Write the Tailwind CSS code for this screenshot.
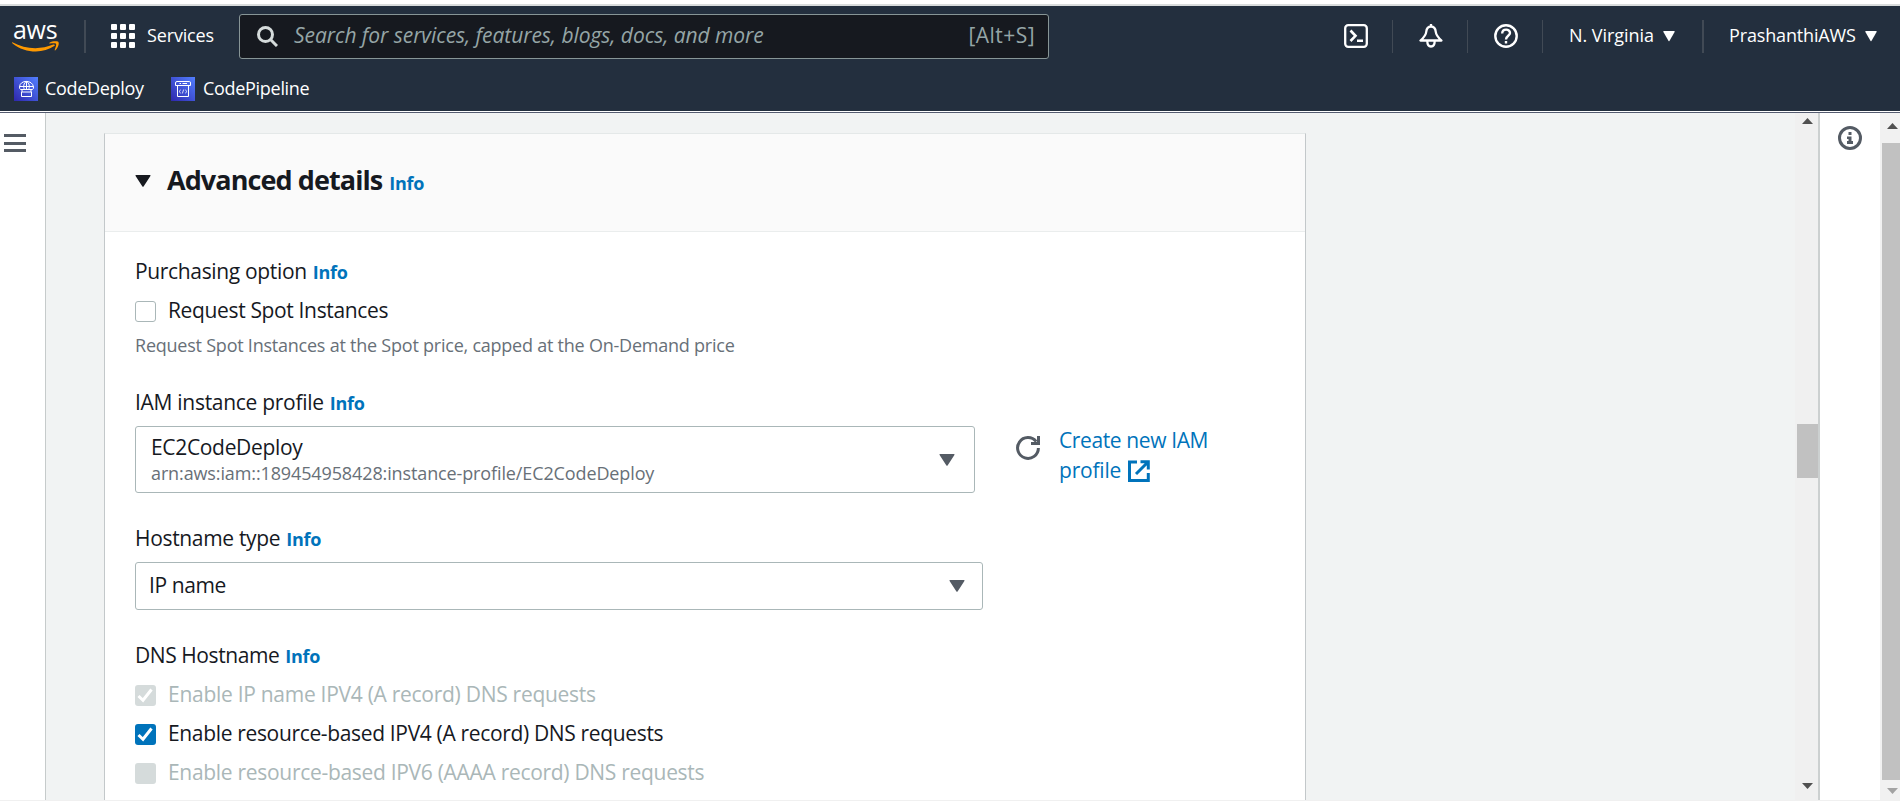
<!DOCTYPE html>
<html lang="en">
<head>
<meta charset="utf-8">
<title>Launch an instance</title>
<script src="https://cdn.jsdelivr.net/npm/@tailwindcss/browser@4"></script>
</head>
<body class="flex h-[801px] w-[1900px] flex-col overflow-hidden bg-white font-['Open_Sans','Noto_Sans',sans-serif] text-[21px] leading-[30px] text-[#16191f]">
  <header class="mt-1 flex h-[107px] shrink-0 flex-col border-t-2 border-[#d9dcdc] bg-[#232f3e] text-lg font-medium leading-6 text-white">
    <div class="flex h-[60px] shrink-0 items-center">
      <div class="ml-3 flex w-[48px] flex-col">
        <span class="pl-[1px] text-[25px] font-medium leading-[20px] tracking-[-0.3px]">aws</span>
        <svg class="mt-[2px] h-3 w-12" viewBox="0 0 48 12" fill="#ff9900"><path d="M0.4 1.2C13 8.2 28 9 41.300 3.600C42.600 3 43.400 4.200 42.200 5.100C31 13 13 12.600 0.300 2.200C-.2 1.700 0 1 .4 1.200Z"/><path d="M37.500 1.700C40 .1 44.500 0 46.300.7C47.500 2.100 46.300 6.800 43.400 9.200C42.900 9.600 42.500 9.300 42.700 8.800C43.500 6.800 44.700 3.700 44 2.800C43.200 1.900 40 2.300 37.900 2.500C37.300 2.600 37 2.100 37.500 1.700Z"/></svg>
      </div>
      <div class="ml-[24px] h-[33px] w-[2px] bg-[#414a55]"></div>
      <svg class="ml-[25px] h-6 w-6" viewBox="0 0 24 24" fill="#fff"><g id="r"><rect width="6" height="6" rx="1"/><rect x="9" width="6" height="6" rx="1"/><rect x="18" width="6" height="6" rx="1"/></g><use href="#r" y="9"/><use href="#r" y="18"/></svg>
      <span class="ml-[12px] w-[67px] pb-[2px] tracking-[-0.15px]">Services</span>
      <div class="ml-[25px] flex h-[45px] w-[810px] items-center rounded-[3px] border border-[#879596] bg-[#16191f] font-normal text-[#95a5a6]">
        <svg class="ml-[17px] h-[21px] w-[21px]" viewBox="0 0 21 21" fill="none" stroke="#d5dbdb" stroke-width="3"><circle cx="8.500" cy="8.500" r="7"/><path d="M13.500 13.500 20 20"/></svg>
        <span class="ml-[16px] pb-[2px] text-[21px] italic leading-[30px] tracking-[-0.06px]">Search for services, features, blogs, docs, and more</span>
        <span class="ml-auto mr-[13px] pb-[2px] text-[21px] leading-[30px] tracking-[0.45px]">[Alt+S]</span>
      </div>
      <svg class="ml-[295px] h-6 w-6" viewBox="0 0 24 24" fill="none" stroke="#fff" stroke-width="2.300"><rect x="1.200" y="1.200" width="21.600" height="21.600" rx="3"/><path d="M6.500 6.500 11.500 11.800 6.500 17M13 16.700H19" stroke-width="2.600"/></svg>
      <div class="ml-6 h-[33px] w-px bg-[#414a55]"></div>
      <svg class="ml-[26px] h-6 w-6" viewBox="0 0 24 24" fill="none" stroke="#fff" stroke-width="2.300" stroke-linejoin="round"><path d="M12 0V3M12 2.500C9 2.500 7.500 5 7.200 8C6.900 11.500 5.500 13 1.500 16.500H22.500C18.500 13 17.100 11.500 16.800 8C16.500 5 15 2.500 12 2.500ZM8.300 17C8.300 24.300 15.700 24.300 15.700 17"/></svg>
      <div class="ml-6 h-[33px] w-px bg-[#414a55]"></div>
      <svg class="ml-[26px] h-6 w-6" viewBox="0 0 24 24" fill="none" stroke="#fff" stroke-width="2.400"><circle cx="12" cy="12" r="10.700"/><path d="M8.200 9.500C8.200 4.300 16 4.500 16 9C16 11.800 12 11.800 12 15.500M12 17V19.500"/></svg>
      <div class="ml-6 h-[33px] w-px bg-[#414a55]"></div>
      <span class="ml-[26px] w-[86px] whitespace-nowrap pb-[2px] tracking-[-0.05px]">N. Virginia</span>
      <svg class="ml-[8px] h-[11px] w-3" viewBox="0 0 12 11" fill="#fff"><path d="M.8 0H11.200Q12 .2 11.600 1L6.400 10Q6 10.600 5.600 10L.4 1Q0 .2.8 0Z"/></svg>
      <div class="ml-[27px] h-[33px] w-[2px] bg-[#414a55]"></div>
      <span class="ml-[25px] w-[128px] pb-[2px] tracking-[-0.15px]">PrashanthiAWS</span>
      <svg class="ml-[8px] h-[11px] w-3" viewBox="0 0 12 11" fill="#fff"><path d="M.8 0H11.200Q12 .2 11.600 1L6.400 10Q6 10.600 5.600 10L.4 1Q0 .2.8 0Z"/></svg>
    </div>
    <div class="flex h-[46px] items-center pl-[14px]">
      <svg class="h-6 w-6" viewBox="0 0 24 24" fill="none" stroke="#fff"><defs><linearGradient id="g" x1="0" y1="1" x2="1" y2="0"><stop stop-color="#2e27ad"/><stop offset="1" stop-color="#527fff"/></linearGradient></defs><rect width="24" height="24" fill="url(#g)" stroke="none"/><path d="M8 12.500H6.500Q5.500 12 5.500 10C5.800 2.500 18.700 2.500 19.500 10Q19.500 12 18.500 12.500H8M5.700 9.500H19.300M12.500 4.500V12.500M10.500 12.500C9 10 9.500 6 12.500 4.500C15.500 6 16 10 14.500 12.500M7.500 15H17.500V19.500H7.500ZM8 12.500V15M17 12.500V15"/></svg>
      <span class="ml-[7px] w-[100px] pb-[2px] tracking-[-0.32px]">CodeDeploy</span>
      <svg class="ml-[26px] h-6 w-6" viewBox="0 0 24 24" fill="none" stroke="#fff"><rect width="24" height="24" fill="url(#g)" stroke="none"/><path d="M6 4.500H18.500Q19.500 4.500 19.500 6V8.500H4.500V6Q4.500 4.500 6 4.500ZM6.500 8.500V19.500H17.500V8.500M8.500 6.500H10M11.500 6.500H16"/><path stroke-width=".8" d="M9.800 12.800 8 14.500 9.800 16.200M14.200 12.800 16 14.500 14.200 16.200M12.700 12.500 11.300 16.500"/></svg>
      <span class="ml-[8px] pb-[2px] tracking-[-0.3px]">CodePipeline</span>
    </div>
  </header>

  <div class="mt-px flex min-h-0 flex-1 border-t border-[#545b6f] bg-[#f1f3f3]">
    <nav class="flex w-[46px] shrink-0 flex-col gap-[4.6px] border-r border-[#c6cbcb] bg-white pl-1 pt-[21px]">
      <div class="h-[3px] w-[22px] bg-[#545b64]"></div>
      <div class="h-[3px] w-[22px] bg-[#545b64]"></div>
      <div class="h-[3px] w-[22px] bg-[#545b64]"></div>
    </nav>

    <main class="flex min-w-0 flex-1 flex-col pl-[58px] pt-[20px]">
      <section class="flex w-[1202px] flex-1 flex-col border border-b-0 border-x-[#c3c8ca] border-t-[#e4e8e8] bg-white">
        <div class="flex h-[98px] shrink-0 items-start border-b border-[#eaeded] bg-[#fafafa] pl-[30px] pt-[26px]">
          <svg class="mt-[15px] h-3 w-4" viewBox="0 0 16 12" fill="#16191f"><path d="M1.200 0H14.800Q16 .2 15.400 1.100L8.600 11.500Q8 12.200 7.400 11.500L.6 1.100Q0 .2 1.200 0Z"/></svg>
          <h2 class="ml-[16px] whitespace-nowrap text-[27px] font-bold leading-10 tracking-[-0.92px]">Advanced details<span class="ml-[7px] text-lg tracking-[-0.25px] text-[#0073bb]">Info</span></h2>
        </div>
        <div class="flex flex-col pl-[30px] pt-6">
          <div class="h-[30px] tracking-[-0.34px]">Purchasing option<span class="ml-[6px] text-lg font-bold leading-none tracking-[-0.25px] text-[#0073bb]">Info</span></div>
          <div class="mt-[9px] flex h-[30px]">
            <span class="mt-[6px] h-[21px] w-[21px] rounded-[3px] border border-[#aab7b8]"></span>
            <span class="ml-3 tracking-[-0.35px]">Request Spot Instances</span>
          </div>
          <p class="mt-2 h-6 text-lg leading-6 tracking-[-0.23px] text-[#687078]">Request Spot Instances at the Spot price, capped at the On-Demand price</p>

          <div class="mt-[30px] h-[30px] tracking-[-0.29px]">IAM instance profile<span class="ml-[6px] text-lg font-bold leading-none tracking-[-0.25px] text-[#0073bb]">Info</span></div>
          <div class="mt-[9px] flex h-[67px]">
            <div class="flex w-[840px] items-center rounded-[3px] border border-[#aab7b8] pl-[15px] pr-[19px]">
              <div class="flex flex-col pb-[1px]">
                <span class="leading-7 tracking-[-0.33px]">EC2CodeDeploy</span>
                <span class="text-lg leading-6 tracking-[-0.12px] text-[#687078]">arn:aws:iam::189454958428:instance-profile/EC2CodeDeploy</span>
              </div>
              <svg class="ml-auto h-3 w-4" viewBox="0 0 16 12" fill="#545b64"><path d="M1.200 0H14.800Q16 .2 15.400 1.100L8.600 11.500Q8 12.200 7.400 11.500L.6 1.100Q0 .2 1.200 0Z"/></svg>
            </div>
            <svg class="ml-[41px] mt-[10px] h-6 w-6" viewBox="0 0 24 24" fill="none" stroke="#545b64" stroke-width="3"><path d="M22.400 12A10.400 10.400 0 1 1 20.200 5.600M22.500 0V7.500H15"/></svg>
            <div class="-mt-px ml-[19px] w-[170px] tracking-[-0.38px] text-[#0073bb]">Create new IAM<br><span class="tracking-[-0.2px]">profile</span><svg class="ml-[7px] inline-block h-[22px] w-[22px] align-[-4px]" viewBox="0 0 22 22" fill="none" stroke="#0073bb" stroke-width="3"><path d="M9 2H1.500V20.500H20.300V13M12.500 1.700H20.300V9.500M20 2 8 14"/></svg></div>
          </div>

          <div class="mt-[30px] h-[30px] tracking-[-0.33px]">Hostname type<span class="ml-[6px] text-lg font-bold leading-none tracking-[-0.25px] text-[#0073bb]">Info</span></div>
          <div class="mt-[9px] flex h-12 w-[848px] items-center rounded-[3px] border border-[#aab7b8] pl-[13px] pr-[17px]">
            <span class="pb-[2px] tracking-[-0.4px]">IP name</span>
            <svg class="ml-auto h-3 w-4" viewBox="0 0 16 12" fill="#545b64"><path d="M1.200 0H14.800Q16 .2 15.400 1.100L8.600 11.500Q8 12.200 7.400 11.500L.6 1.100Q0 .2 1.200 0Z"/></svg>
          </div>

          <div class="mt-[30px] h-[30px] tracking-[-0.43px]">DNS Hostname<span class="ml-[6px] text-lg font-bold leading-none tracking-[-0.25px] text-[#0073bb]">Info</span></div>
          <div class="mt-[9px] flex flex-col gap-[9px] text-[#aab7b8]">
            <div class="flex h-[30px]">
              <svg class="mt-[6px] h-[21px] w-[21px] rounded-[3px] bg-[#d5dbdb]" viewBox="0 0 21 21" fill="none" stroke="#fff" stroke-width="3"><path d="M3.500 11 8 15.300 16.500 4.500"/></svg>
              <span class="ml-3 tracking-[-0.28px]">Enable IP name IPV4 (A record) DNS requests</span>
            </div>
            <div class="flex h-[30px] text-[#16191f]">
              <svg class="mt-[6px] h-[21px] w-[21px] rounded-[3px] bg-[#0073bb]" viewBox="0 0 21 21" fill="none" stroke="#fff" stroke-width="3"><path d="M3.500 11 8 15.300 16.500 4.500"/></svg>
              <span class="ml-3 tracking-[-0.34px]">Enable resource-based IPV4 (A record) DNS requests</span>
            </div>
            <div class="flex h-[30px]">
              <span class="mt-[6px] h-[21px] w-[21px] rounded-[3px] bg-[#d5dbdb]"></span>
              <span class="ml-3 tracking-[-0.3px]">Enable resource-based IPV6 (AAAA record) DNS requests</span>
            </div>
          </div>
        </div>
      </section>
    </main>

    <div class="flex w-[23px] shrink-0 flex-col items-end bg-[#f0f0f0] pb-[11px] pr-0 pt-[5px]">
      <svg class="mr-[5px] h-[6px] w-[11px]" viewBox="0 0 11 6" fill="#505050"><path d="M0 6 5.500 0 11 6Z"/></svg>
      <div class="mt-[300px] h-[54px] w-[21px] bg-[#c1c1c1]"></div>
      <svg class="mr-[5px] mt-auto h-[6px] w-[11px]" viewBox="0 0 11 6" fill="#505050"><path d="M0 0 5.500 6 11 0Z"/></svg>
    </div>
    <aside class="flex w-[62px] shrink-0 justify-center border-l-2 border-[#ccd0d0] bg-white pt-[13px]">
      <svg class="h-6 w-6" viewBox="0 0 24 24"><circle cx="12" cy="12" r="10.500" fill="none" stroke="#545b64" stroke-width="3"/><path fill="#545b64" d="M10.500 6H13.500V9H10.500ZM9 10.500H13.500V15H15V18H9V15H10.500V13H9Z"/></svg>
    </aside>
    <div class="flex w-5 shrink-0 flex-col items-end bg-[#f1f1f1] pb-[6px] pt-[10px]">
      <svg class="mr-[2px] h-[6px] w-[11px]" viewBox="0 0 11 6" fill="#505050"><path d="M0 6 5.500 0 11 6Z"/></svg>
      <div class="mt-[14px] h-[637px] w-[18px] bg-[#c1c1c1]"></div>
      <svg class="mr-[2px] mt-auto h-[6px] w-[11px]" viewBox="0 0 11 6" fill="#a3a3a3"><path d="M0 0 5.500 6 11 0Z"/></svg>
    </div>
  </div>
  <div class="h-px w-full shrink-0 bg-[#f0f0f0]"></div>
</body>
</html>
